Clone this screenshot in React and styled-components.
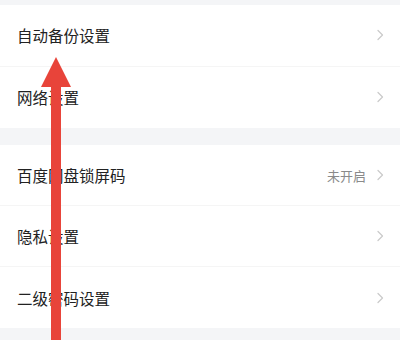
import React from "react";
import styled, { createGlobalStyle } from "styled-components";

const GlobalStyle = createGlobalStyle`
  html, body {
    margin: 0;
    padding: 0;
    background: #f4f5f7;
    font-family: "Noto Sans CJK SC", "Noto Sans", sans-serif;
  }
`;

const groups = [
  {
    rowHeight: 61.5,
    items: [{ label: "自动备份设置" }, { label: "网络设置" }],
  },
  {
    rowHeight: 61,
    items: [
      { label: "百度网盘锁屏码", value: "未开启" },
      { label: "隐私设置" },
      { label: "二级密码设置" },
    ],
  },
];

function Chevron() {
  return (
    <svg width="8" height="12" viewBox="0 0 8 12">
      <path
        d="M2 1.5 L6.5 6 L2 10.5"
        fill="none"
        stroke="#cbcbcb"
        strokeWidth="1.3"
        strokeLinecap="round"
        strokeLinejoin="round"
      />
    </svg>
  );
}

function App() {
  return (
    <Page>
      <GlobalStyle />
      {groups.map((group, gi) => (
        <Section key={gi}>
          {group.items.map((item, i) => (
            <Row key={item.label} $height={group.rowHeight} $last={i === group.items.length - 1}>
              <Label>{item.label}</Label>
              <Trail>
                {item.value && <Value>{item.value}</Value>}
                <Chevron />
              </Trail>
            </Row>
          ))}
        </Section>
      ))}
      <Arrow viewBox="0 0 32 284" width="32" height="284">
        <path d="M16 0 L31 30 L21 30 L21 284 L11 284 L11 30 L1 30 Z" fill="#e8443a" />
      </Arrow>
    </Page>
  );
}

const Page = styled.div`
  position: relative;
  width: 400px;
  height: 340px;
  overflow: hidden;
  padding-top: 5px;
  box-sizing: border-box;
  display: flex;
  flex-direction: column;
  gap: 17px;
  background: #f4f5f7;
`;

const Section = styled.div`
  background: #ffffff;
  display: flex;
  flex-direction: column;
`;

const Row = styled.div`
  height: ${(p) => p.$height}px;
  display: flex;
  align-items: center;
  justify-content: space-between;
  padding: 0 16px 0 17px;
  box-sizing: border-box;
  border-bottom: ${(p) => (p.$last ? "none" : "1px solid #f5f5f5")};
`;

const Label = styled.span`
  font-size: 15.5px;
  color: #222222;
  letter-spacing: 0;
`;

const Trail = styled.div`
  display: flex;
  align-items: center;
  gap: 10px;
`;

const Value = styled.span`
  font-size: 13px;
  color: #8a8a8a;
`;

const Arrow = styled.svg`
  position: absolute;
  left: 40px;
  top: 57px;
`;

export default App;
